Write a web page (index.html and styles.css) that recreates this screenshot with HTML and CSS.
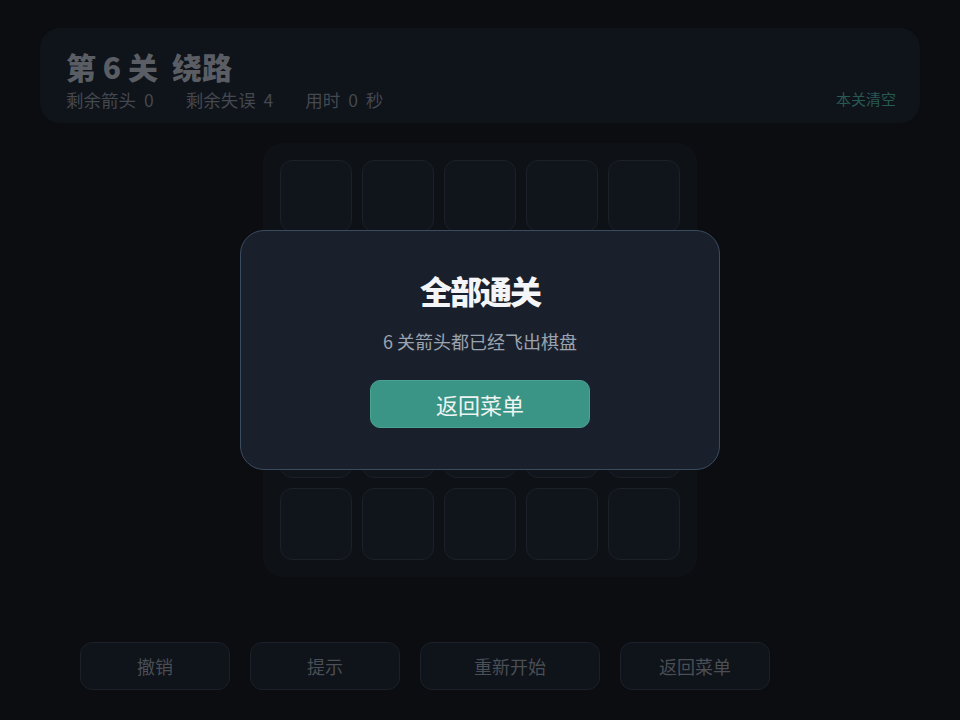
FILE: index.html
```html
<!DOCTYPE html>
<html lang="zh-CN">
<head>
<meta charset="utf-8">
<title>第 6 关 绕路</title>
<link rel="stylesheet" href="styles.css">
</head>
<body>
<div class="page">
  <header class="topbar">
    <div class="info">
      <h1 class="title"><span>第 6 关</span><span>绕路</span></h1>
      <div class="stats">
        <span>剩余箭头 0</span>
        <span>剩余失误 4</span>
        <span>用时 0 秒</span>
      </div>
    </div>
    <div class="status">本关清空</div>
  </header>

  <main class="board">
    <div class="cell"></div><div class="cell"></div><div class="cell"></div><div class="cell"></div><div class="cell"></div>
    <div class="cell"></div><div class="cell"></div><div class="cell"></div><div class="cell"></div><div class="cell"></div>
    <div class="cell"></div><div class="cell"></div><div class="cell"></div><div class="cell"></div><div class="cell"></div>
    <div class="cell"></div><div class="cell"></div><div class="cell"></div><div class="cell"></div><div class="cell"></div>
    <div class="cell"></div><div class="cell"></div><div class="cell"></div><div class="cell"></div><div class="cell"></div>
  </main>

  <nav class="actions">
    <button class="btn">撤销</button>
    <button class="btn">提示</button>
    <button class="btn btn-wide">重新开始</button>
    <button class="btn">返回菜单</button>
  </nav>
</div>

<div class="overlay">
  <div class="modal">
    <h2 class="modal-title">全部通关</h2>
    <p class="modal-text">6 关箭头都已经飞出棋盘</p>
    <button class="modal-btn">返回菜单</button>
  </div>
</div>
</body>
</html>
```

FILE: styles.css
```css
* { box-sizing: border-box; }
html, body {
  margin: 0;
  padding: 0;
  background: #0b0d11;
  font-family: "Noto Sans CJK SC", "Noto Sans", sans-serif;
}
.page {
  width: 960px;
  height: 720px;
  padding: 28px 40px 0 40px;
}
.topbar {
  height: 95px;
  background: #0f131a;
  border-radius: 20px;
  padding: 20px 24px 0 26px;
  display: flex;
  justify-content: space-between;
  align-items: flex-start;
}
.title {
  margin: 0;
  display: flex;
  gap: 14px;
  font-family: "Noto Sans CJK SC", sans-serif;
  font-size: 30px;
  line-height: 36px;
  font-weight: 900;
  color: #5a5e64;
}
.stats {
  margin-top: 4px;
  display: flex;
  gap: 32px;
  font-size: 17.5px;
  line-height: 24px;
  word-spacing: 4px;
  color: #44484f;
}
.status {
  margin-top: 39px;
  font-size: 15px;
  line-height: 24px;
  color: #285a54;
}
.board {
  width: 434px;
  margin: 20px auto 0;
  padding: 17px;
  background: #0e1217;
  border-radius: 20px;
  display: grid;
  grid-template-columns: repeat(5, 72px);
  grid-auto-rows: 72px;
  gap: 10px;
}
.cell {
  background: #10141b;
  border: 1px solid #1b2029;
  border-radius: 12px;
}
.actions {
  margin-top: 65px;
  padding-left: 40px;
  display: flex;
  gap: 20px;
}
.btn {
  width: 150px;
  height: 48px;
  background: #0f131a;
  border: 1px solid #1b2029;
  border-radius: 12px;
  font-family: "Noto Sans CJK SC", sans-serif;
  font-size: 18px;
  color: #4a4e55;
  padding: 0;
}
.btn-wide { width: 180px; }
.overlay {
  position: fixed;
  inset: 0;
  display: flex;
  align-items: center;
  justify-content: center;
  padding-bottom: 20px;
}
.modal {
  width: 480px;
  height: 240px;
  background: #1a202b;
  border: 1px solid #3a4b60;
  border-radius: 24px;
  padding-top: 39px;
  display: flex;
  flex-direction: column;
  align-items: center;
}
.modal-title {
  margin: 0;
  font-size: 32px;
  line-height: 40px;
  font-weight: 900;
  letter-spacing: -2px;
  color: #f3f5f8;
}
.modal-text {
  margin: 18px 0 0;
  font-size: 18px;
  line-height: 26px;
  color: #9aa3b0;
}
.modal-btn {
  margin-top: 26px;
  width: 220px;
  height: 48px;
  background: #3a9586;
  border: 1px solid #4aa393;
  border-radius: 10px;
  font-family: "Noto Sans CJK SC", sans-serif;
  font-size: 22px;
  color: #eef4f2;
  padding: 0;
}
```
